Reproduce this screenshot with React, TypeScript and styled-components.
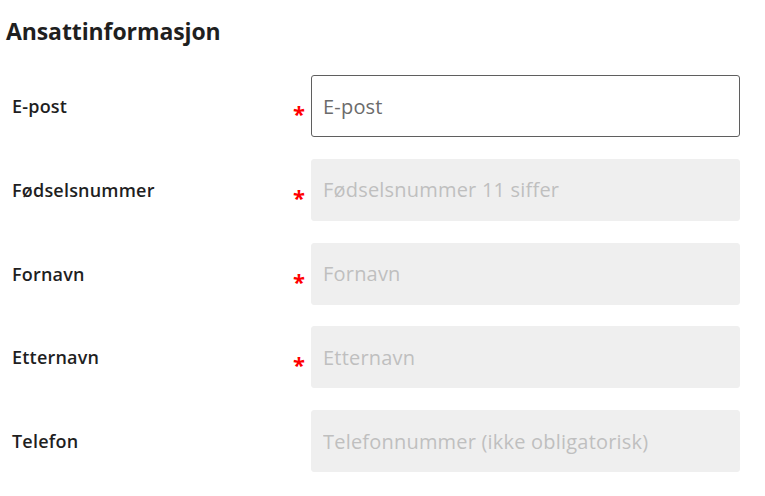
import styled, { createGlobalStyle } from 'styled-components';

const GlobalStyle = createGlobalStyle`
  html, body {
    margin: 0;
    padding: 0;
    background: #ffffff;
  }
  body {
    font-family: 'Open Sans', 'Noto Sans', sans-serif;
    color: #1f1f1f;
  }
`;

const Page = styled.div({
  width: 765,
  height: 496,
  boxSizing: 'border-box',
  padding: '14px 0 0 6px',
  overflow: 'hidden',
});

const Heading = styled.h2({
  margin: 0,
  fontSize: 23,
  fontWeight: 700,
  lineHeight: '34px',
  color: '#1f1f1f',
  letterSpacing: -0.1,
});

const Form = styled.div({
  display: 'flex',
  flexDirection: 'column',
  gap: 21.75,
  marginTop: 27,
});

const Row = styled.div({
  display: 'flex',
  alignItems: 'center',
  height: 62,
});

const Label = styled.label({
  width: 282,
  paddingLeft: 6,
  boxSizing: 'border-box',
  fontSize: 18,
  fontWeight: 600,
  color: '#1f1f1f',
  letterSpacing: 0.2,
});

const Required = styled.span<{ $visible: boolean }>((props) => ({
  width: 23,
  paddingLeft: 5,
  boxSizing: 'border-box',
  fontSize: 22,
  fontWeight: 700,
  color: '#ff0000',
  paddingTop: 14,
  visibility: props.$visible ? 'visible' : 'hidden',
}));

const Field = styled.input<{ $active?: boolean }>((props) => ({
  width: 429,
  height: 62,
  boxSizing: 'border-box',
  padding: '0 11px',
  borderRadius: 3,
  border: props.$active ? '1px solid #5f5f5f' : '1px solid #efefef',
  background: props.$active ? '#ffffff' : '#efefef',
  fontFamily: "'Open Sans', 'Noto Sans', sans-serif",
  fontSize: 20,
  letterSpacing: 0.2,
  outline: 'none',
  '&::placeholder': {
    color: props.$active ? '#6b6b6b' : '#bfbfbf',
  },
}));

const fields = [
  { label: 'E-post', placeholder: 'E-post', required: true, active: true },
  { label: 'Fødselsnummer', placeholder: 'Fødselsnummer 11 siffer', required: true },
  { label: 'Fornavn', placeholder: 'Fornavn', required: true },
  { label: 'Etternavn', placeholder: 'Etternavn', required: true },
  { label: 'Telefon', placeholder: 'Telefonnummer (ikke obligatorisk)', required: false },
];

export default function App() {
  return (
    <>
      <GlobalStyle />
      <Page>
        <Heading>Ansattinformasjon</Heading>
        <Form>
          {fields.map((f) => (
            <Row key={f.label}>
              <Label>{f.label}</Label>
              <Required $visible={f.required}>*</Required>
              <Field $active={f.active} placeholder={f.placeholder} readOnly={!f.active} />
            </Row>
          ))}
        </Form>
      </Page>
    </>
  );
}
